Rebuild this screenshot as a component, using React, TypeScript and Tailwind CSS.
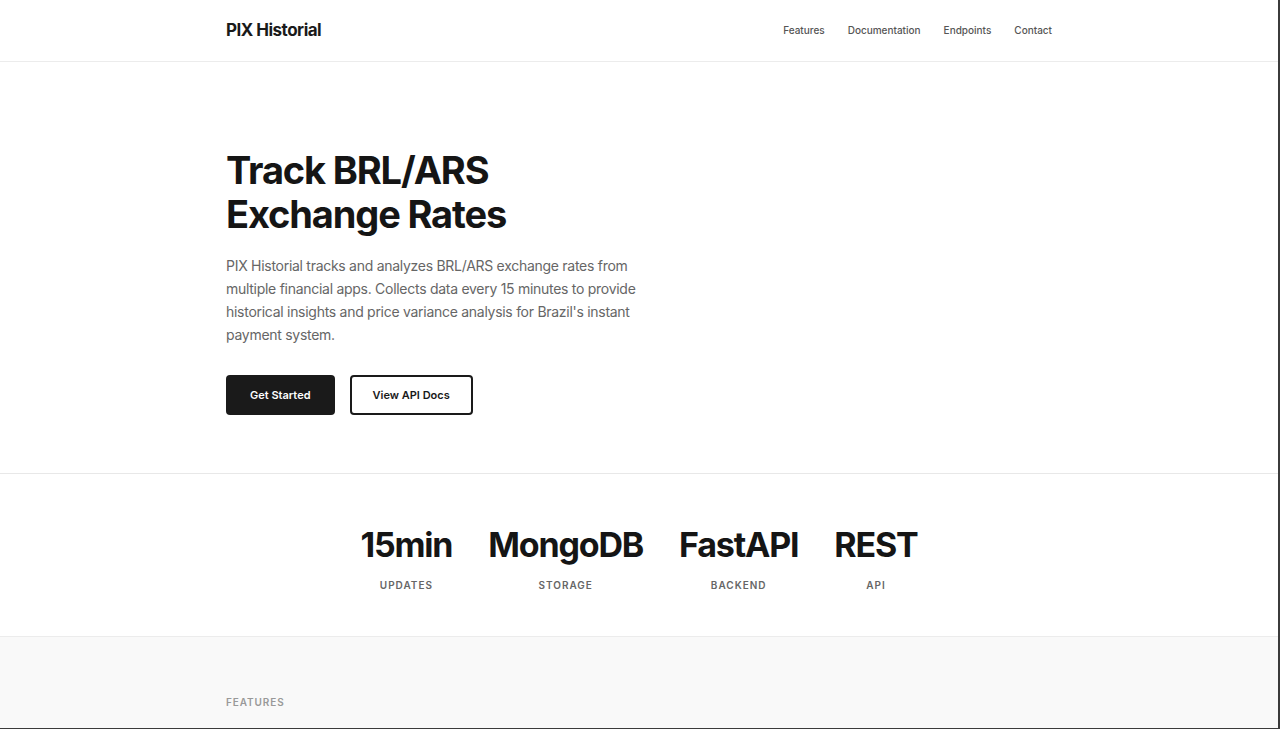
import React from "react";

const font = { fontFamily: "Inter, 'Noto Sans', sans-serif" };

export default function App() {
  return (
    <div
      style={font}
      className="h-[729px] overflow-hidden bg-white border-r-2 border-b border-[#3b3b3b] text-[#1a1a1a] antialiased"
    >
      <header className="h-[62px] border-b border-[#ececec] bg-white">
        <div className="mx-auto flex h-full w-[826px] items-center justify-between">
          <div className="text-[17px] font-bold tracking-[-0.03em] text-[#1a1a1a]">PIX Historial</div>
          <nav className="flex items-center gap-[23px] text-[10px] font-medium text-[#555]">
            <a>Features</a>
            <a>Documentation</a>
            <a>Endpoints</a>
            <a>Contact</a>
          </nav>
        </div>
      </header>

      <section className="border-b border-[#e8e8e8] bg-white pt-[86px] pb-[58px]">
        <div className="mx-auto w-[826px]">
          <h1 className="text-[38px] font-bold leading-[44px] tracking-[-0.03em] text-[#151515]">
            Track BRL/ARS
            <br />
            Exchange Rates
          </h1>
          <p className="mt-[18px] max-w-[410px] text-[14px] leading-[23px] tracking-[-0.02em] text-[#666]">
            PIX Historial tracks and analyzes BRL/ARS exchange rates from multiple financial apps.
            Collects data every 15 minutes to provide historical insights and price variance analysis
            for Brazil's instant payment system.
          </p>
          <div className="mt-[29px] flex gap-[15px]">
            <button className="h-[40px] rounded-[4px] bg-[#1a1a1a] px-6 text-[11px] font-semibold text-white">
              Get Started
            </button>
            <button className="h-[40px] rounded-[4px] border-2 border-[#1a1a1a] bg-white px-[21px] text-[11px] font-semibold text-[#1a1a1a]">
              View API Docs
            </button>
          </div>
        </div>
      </section>

      <section className="border-b border-[#ececec] bg-white pt-[51px] pb-[44px]">
        <div className="flex justify-center gap-[36px]">
          {[
            ["15min", "Updates"],
            ["MongoDB", "Storage"],
            ["FastAPI", "Backend"],
            ["REST", "API"],
          ].map(([n, l]) => (
            <div key={n} className="flex flex-col items-center">
              <div className="text-[34px] font-bold leading-[40px] tracking-[-0.035em] text-[#151515]">{n}</div>
              <div className="mt-[13px] text-[10px] font-semibold leading-[14px] uppercase tracking-[0.1em] text-[#666]">{l}</div>
            </div>
          ))}
        </div>
      </section>

      <section className="h-[400px] bg-[#f9f9f9] pt-[58px]">
        <div className="mx-auto w-[826px]">
          <div className="text-[10px] font-semibold uppercase tracking-[0.09em] text-[#999]">Features</div>
        </div>
      </section>
    </div>
  );
}
